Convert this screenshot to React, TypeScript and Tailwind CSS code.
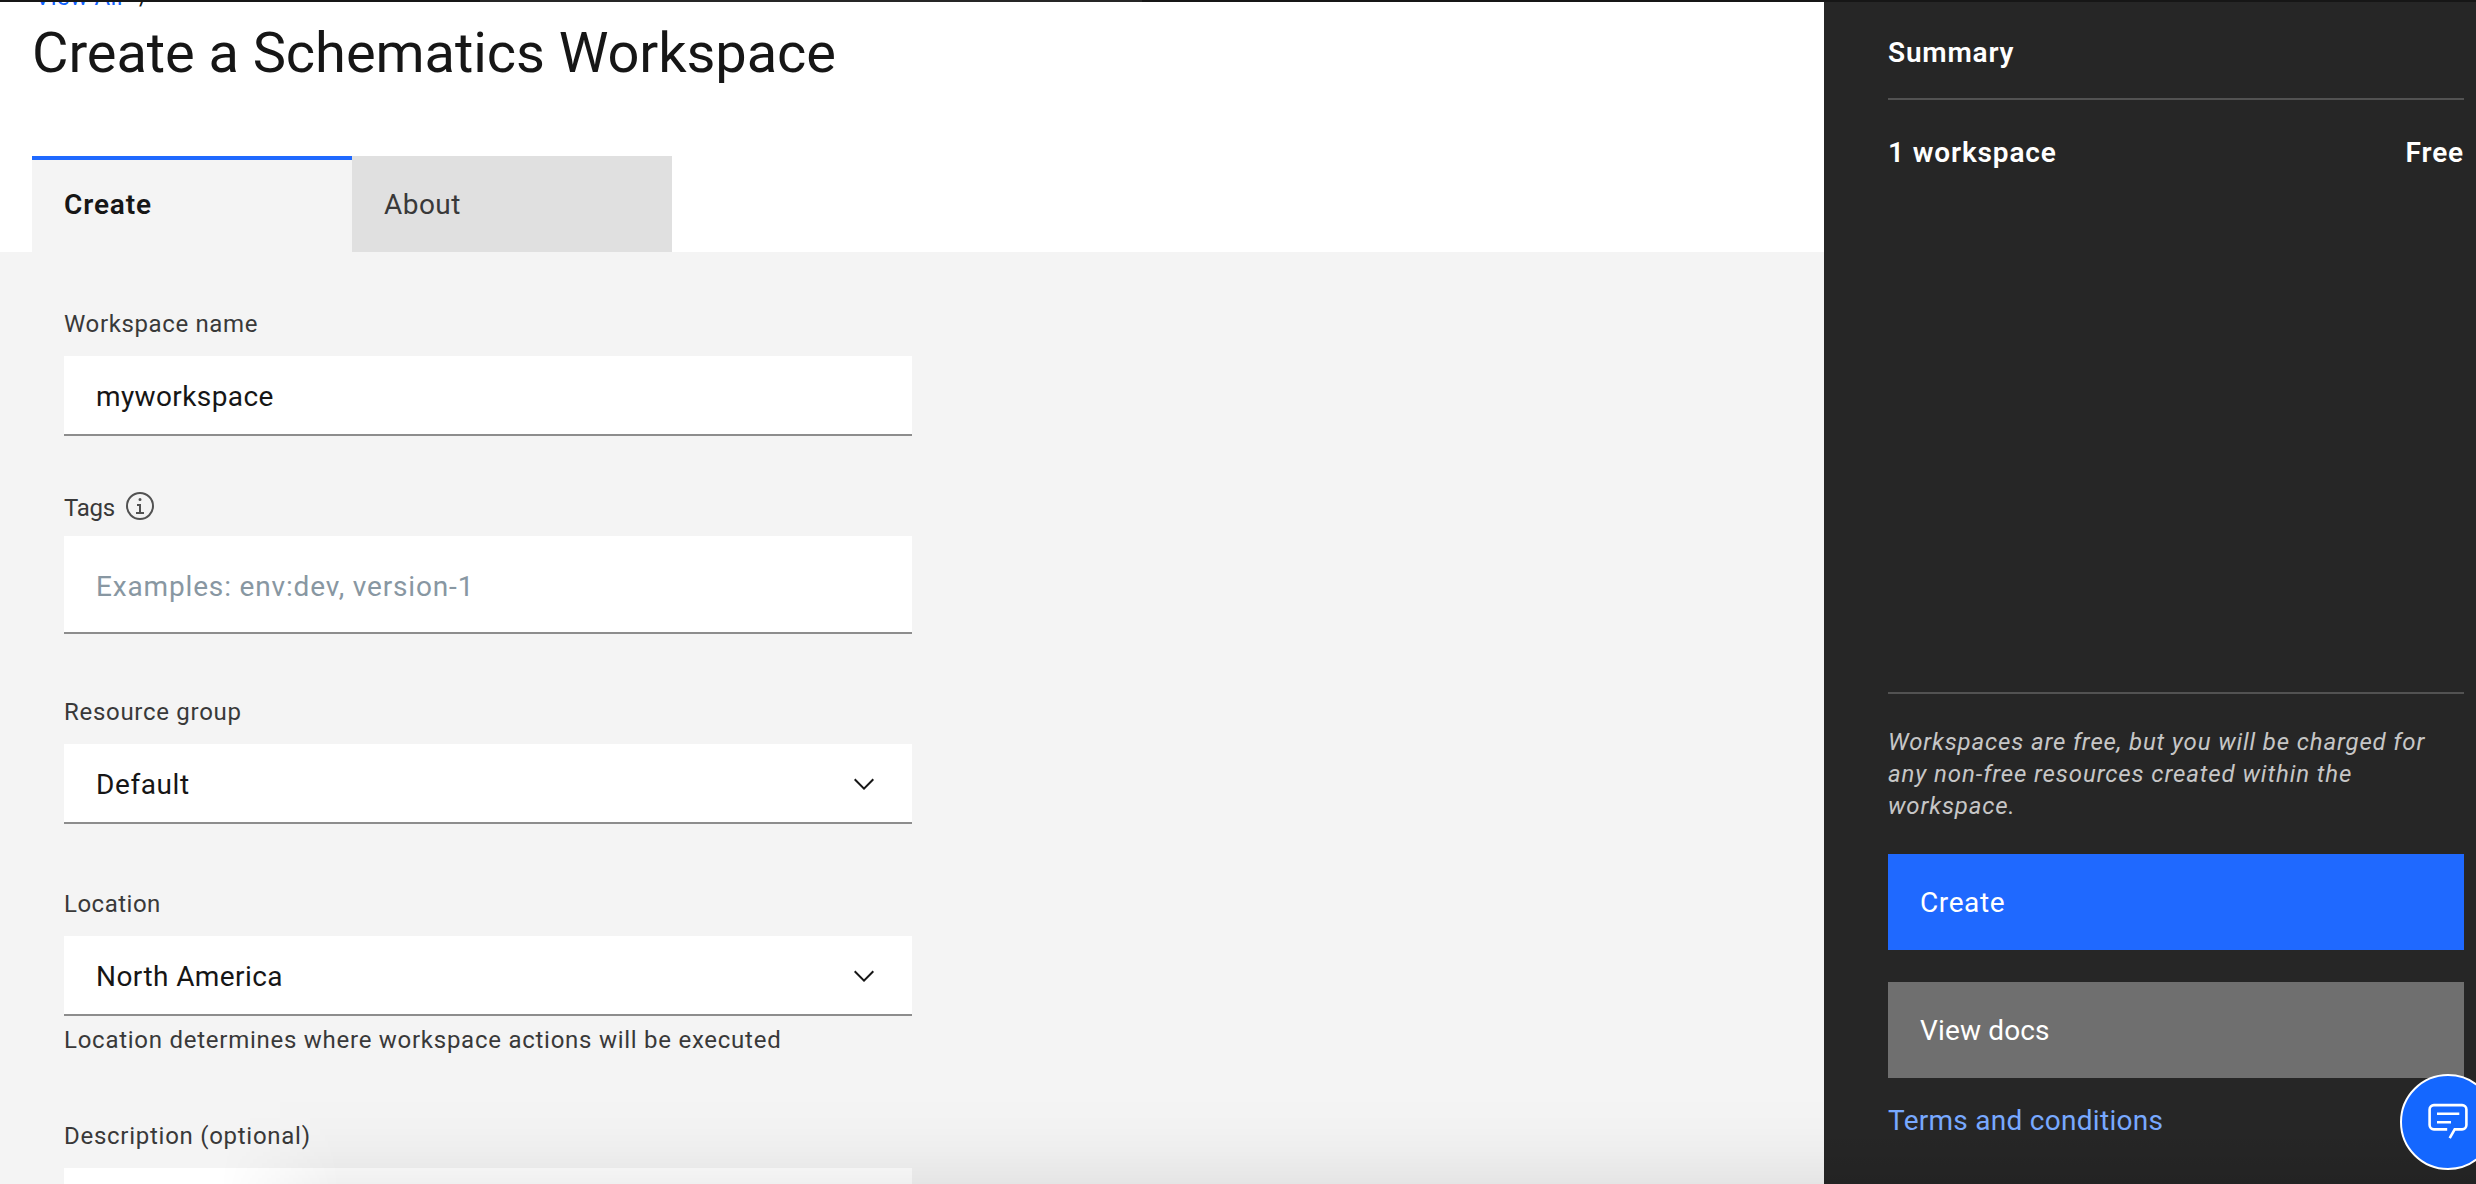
import type { ReactNode } from "react";

function InfoIcon() {
  return (
    <svg viewBox="0 0 32 32" className="-mt-1 size-8 shrink-0" fill="#525252">
      <path d="M17 22V14H13v2h2v6H12v2h8V22zM16 8a1.5 1.5 0 1 0 1.5 1.5A1.5 1.5 0 0 0 16 8z" />
      <circle cx="16" cy="16" r="13" fill="none" stroke="#525252" strokeWidth="2" />
    </svg>
  );
}

function ChevronDown() {
  return (
    <svg viewBox="0 0 16 16" className="mb-[2px] size-8" fill="#161616">
      <path d="M8 11 3 6l.7-.7L8 9.6l4.3-4.3.7.7z" />
    </svg>
  );
}

function ChatIcon() {
  return (
    <svg viewBox="0 0 42 42" className="size-[42px] shrink-0" fill="none" stroke="#fff" strokeWidth="2.6">
      <path d="M20.2 28.4H6.9a4.3 4.3 0 0 1-4.3-4.3V8.4a4.3 4.3 0 0 1 4.3-4.3h28.2a4.3 4.3 0 0 1 4.3 4.3v15.7a4.3 4.3 0 0 1-4.3 4.3h-7.4l-5 8.8" />
      <path d="M10 12.7h22.3M10 21.3h14" />
    </svg>
  );
}

function Label({ children }: { children: ReactNode }) {
  return <div className="flex h-8 items-center text-[24px] leading-8 text-[#393939]">{children}</div>;
}

const field =
  "flex w-[848px] items-center justify-between border-b-2 border-[#8d8d8d] bg-white pt-[3px] pr-8 pl-8 text-[28px] leading-9";

export default function App() {
  return (
    <div className="relative flex h-[1184px] w-[2476px] overflow-hidden bg-[#f4f4f4] font-[Roboto,sans-serif] text-[#161616]">
      <div className="absolute inset-x-0 top-0 z-10 flex h-[2px] bg-[#161616]">
        <div className="ml-[480px] w-[662px] bg-[#262626]" />
      </div>

      <main className="relative flex w-[1824px] shrink-0 flex-col overflow-hidden">
        <header className="flex h-[252px] shrink-0 flex-col bg-white px-8">
          <nav className="-mt-[15px] flex h-6 gap-4 pl-[3px] text-[24px] leading-6">
            <a className="tracking-[0.35px] text-[#0f62fe]">View All</a>
            <span>/</span>
          </nav>
          <h1 className="mt-2 text-[56px] leading-[72px] tracking-[-0.07px]">Create a Schematics Workspace</h1>
          <div className="mt-auto flex text-[28px] leading-9">
            <button className="h-24 w-[320px] border-t-4 border-[#1f69ff] bg-[#f4f4f4] px-8 pb-[2px] text-left font-semibold tracking-[0.89px]">
              Create
            </button>
            <button className="h-24 w-[320px] bg-[#e0e0e0] px-8 pt-[2px] text-left tracking-[0.45px] text-[#393939]">
              About
            </button>
          </div>
        </header>

        <form className="flex flex-col px-16 pt-14">
          <Label><span className="tracking-[0.64px]">Workspace name</span></Label>
          <div className={`${field} mt-4 h-20 tracking-[0.39px]`}>myworkspace</div>

          <div className="mt-14">
            <Label>
              <span className="w-[60px] tracking-[-0.3px]">Tags</span>
              <InfoIcon />
            </Label>
          </div>
          <div className={`${field} mt-3 h-[98px] tracking-[0.84px] text-[#8897a2]`}>
            <span className="pt-[3px]">Examples: env:dev, version-1</span>
          </div>

          <div className="mt-[62px]">
            <Label><span className="tracking-[0.71px]">Resource group</span></Label>
          </div>
          <div className={`${field} mt-4 h-20 tracking-[0.59px]`}>
            <span>Default</span>
            <ChevronDown />
          </div>

          <div className="mt-16">
            <Label><span className="tracking-[0.5px]">Location</span></Label>
          </div>
          <div className={`${field} mt-4 h-20 tracking-[0.42px]`}>
            <span>North America</span>
            <ChevronDown />
          </div>
          <div className="mt-2">
            <Label><span className="tracking-[0.74px]">Location determines where workspace actions will be executed</span></Label>
          </div>

          <div className="mt-16">
            <Label><span className="tracking-[0.73px]">Description (optional)</span></Label>
          </div>
          <div className="mt-4 h-20 w-[848px] bg-white" />
        </form>

        <div className="pointer-events-none absolute right-0 bottom-0 left-[220px] h-[90px] bg-[linear-gradient(to_bottom,rgba(0,0,0,0)_0%,rgba(0,0,0,0.006)_35%,rgba(0,0,0,0.022)_62%,rgba(0,0,0,0.058)_100%)] [mask-image:linear-gradient(to_right,transparent,black_120px)]" />
      </main>

      <aside className="flex flex-1 flex-col bg-[#262626] bg-[linear-gradient(to_bottom,transparent_1130px,rgba(0,0,0,0.08)_1184px)] pr-3 pl-16 text-[28px] leading-9 text-white">
        <h2 className="mt-[35px] font-semibold tracking-[0.8px]">Summary</h2>
        <div className="mt-[27px] flex h-[594px] justify-between border-t-2 border-[#525252] pt-[35px] font-semibold tracking-[0.87px]">
          <span>1 workspace</span>
          <span>Free</span>
        </div>
        <div className="border-t-2 border-[#525252] pt-8">
          <p className="text-[24px] leading-8 tracking-[0.86px] whitespace-nowrap text-[#c6c6c6] italic">
            Workspaces are free, but you will be charged for
            <br />
            <span className="tracking-[0.91px]">any non-free resources created within the</span>
            <br />
            workspace.
          </p>
        </div>
        <button className="mt-8 h-24 bg-[#1f69ff] px-8 pt-[2px] text-left tracking-[0.6px]">Create</button>
        <button className="mt-8 h-24 bg-[#6f6f6f] px-8 pt-[2px] text-left tracking-[0.15px]">View docs</button>
        <a className="mt-[25px] tracking-[0.28px] text-[#78a9ff]">Terms and conditions</a>
      </aside>

      <button className="absolute top-[1074px] left-[2400px] flex size-24 items-center justify-center rounded-full border-2 border-white bg-[#1467ff]">
        <ChatIcon />
      </button>
    </div>
  );
}
